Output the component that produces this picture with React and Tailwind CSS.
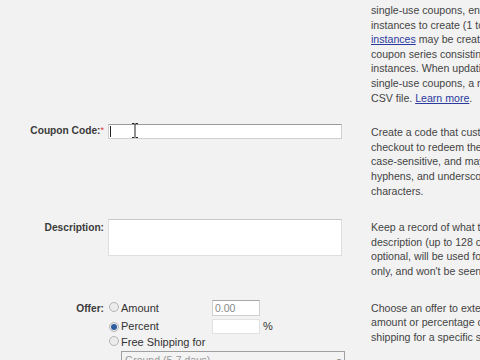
import React from "react";

const Radio = ({ checked }) => (
    <span className="inline-flex w-[10px] h-[10px] rounded-full border border-[#b5b5b5] bg-[#ececec] items-center justify-center shrink-0">
        {checked && <span className="w-[6px] h-[6px] rounded-full bg-[#2f5e9e]" />}
    </span>
);

const Help = ({ lines, className = "" }) => (
    <div className={"ml-[29px] text-[10.6px] leading-[14.6px] text-[#444] whitespace-nowrap " + className}>
        {lines.map((l, i) => (
            <div key={i}>{l}</div>
        ))}
    </div>
);

const Link = ({ children }) => <span className="text-[#2a3a9e] underline">{children}</span>;

const Label = ({ children, className = "" }) => (
    <div
        className={
            "w-[104px] shrink-0 text-right text-[10.2px] leading-[15px] font-bold text-[#3a3a3a] whitespace-nowrap " +
            className
        }
    >
        {children}
    </div>
);

export default function App() {
    return (
        <div
            className="relative w-[480px] h-[360px] overflow-hidden bg-[#f2f2f2]"
            style={{ fontFamily: '"Liberation Sans", Arial, sans-serif' }}
        >
            {/* top help block */}
            <div className="flex pt-[3px]">
                <div className="w-[104px] shrink-0" />
                <div className="ml-[4px] w-[234px] shrink-0" />
                <Help
                    lines={[
                        "single-use coupons, enter the",
                        "instances to create (1 to 1000)",
                        <>
                            <Link>instances</Link> may be created later
                        </>,
                        "coupon series consisting of",
                        "instances. When updating",
                        "single-use coupons, a new",
                        <>
                            CSV file. <Link>Learn more</Link>.
                        </>,
                    ]}
                />
            </div>

            {/* coupon code */}
            <div className="flex mt-[18px]">
                <Label>
                    Coupon Code:<span className="text-[#d33] font-normal text-[9px] align-top">*</span>
                </Label>
                <div className="ml-[4px] w-[234px] shrink-0 pt-[1px]">
                    <div className="relative h-[15px] bg-white border border-[#cfcfcf] border-t-[#9a9a9a]">
                        <span className="absolute left-[1px] top-[1px] w-px h-[11px] bg-[#222]" />
                    </div>
                </div>
                <Help
                    className="pt-[2px]"
                    lines={[
                        "Create a code that customers",
                        "checkout to redeem the offer",
                        "case-sensitive, and may",
                        "hyphens, and underscores",
                        "characters.",
                    ]}
                />
            </div>

            {/* description */}
            <div className="flex mt-[21px]">
                <Label className="pt-[1px]">Description:</Label>
                <div className="ml-[4px] w-[234px] shrink-0">
                    <div className="h-[37px] bg-white border border-[#dedede] border-t-[#c8c8c8]" />
                </div>
                <Help
                    className="pt-[1px]"
                    lines={[
                        "Keep a record of what this",
                        "description (up to 128 characters",
                        "optional, will be used for",
                        "only, and won't be seen by",
                    ]}
                />
            </div>

            {/* offer */}
            <div className="flex mt-[21px]">
                <Label className="pt-[1px]">Offer:</Label>
                <div className="ml-[4px] w-[234px] shrink-0 text-[11px] text-[#333]">
                    <div className="flex items-center h-[17px]">
                        <span className="ml-[1px]"><Radio /></span>
                        <span className="ml-[2px] w-[91px]">Amount</span>
                        <div className="w-[48px] h-[16px] bg-white border border-[#cfcfcf] border-t-[#a8a8a8] text-[10.5px] leading-[14px] pl-[2px] text-[#888]">
                            0.00
                        </div>
                    </div>
                    <div className="flex items-center h-[17px] mt-[1px]">
                        <span className="ml-[1px]"><Radio checked /></span>
                        <span className="ml-[2px] w-[91px]">Percent</span>
                        <div className="w-[48px] h-[15px] bg-white border border-[#e2e2e2]" />
                        <span className="ml-[3px]">%</span>
                    </div>
                    <div className="flex items-center h-[16px]">
                        <span className="ml-[1px]"><Radio /></span>
                        <span className="ml-[2px]">Free Shipping for</span>
                    </div>
                    <div className="ml-[13px] h-[20px] w-[224px] bg-[#f3f3f3] border border-[#a0a0a0] flex items-center justify-between px-[3px] text-[10.5px] text-[#999]">
                        <span>Ground (5-7 days)</span>
                        <span className="text-[8px]">▾</span>
                    </div>
                </div>
                <Help
                    className="pt-[1px]"
                    lines={[
                        "Choose an offer to extend",
                        "amount or percentage off",
                        "shipping for a specific shipping",
                    ]}
                />
            </div>

            {/* mouse I-beam cursor */}
            <svg className="absolute left-[131px] top-[123px]" width="8" height="15" viewBox="0 0 8 15">
                <path d="M1 0.5h2.5M4.5 0.5H7M4 1v13M1 14.5h2.5M4.5 14.5H7" stroke="#222" strokeWidth="1" fill="none" />
            </svg>
        </div>
    );
}
